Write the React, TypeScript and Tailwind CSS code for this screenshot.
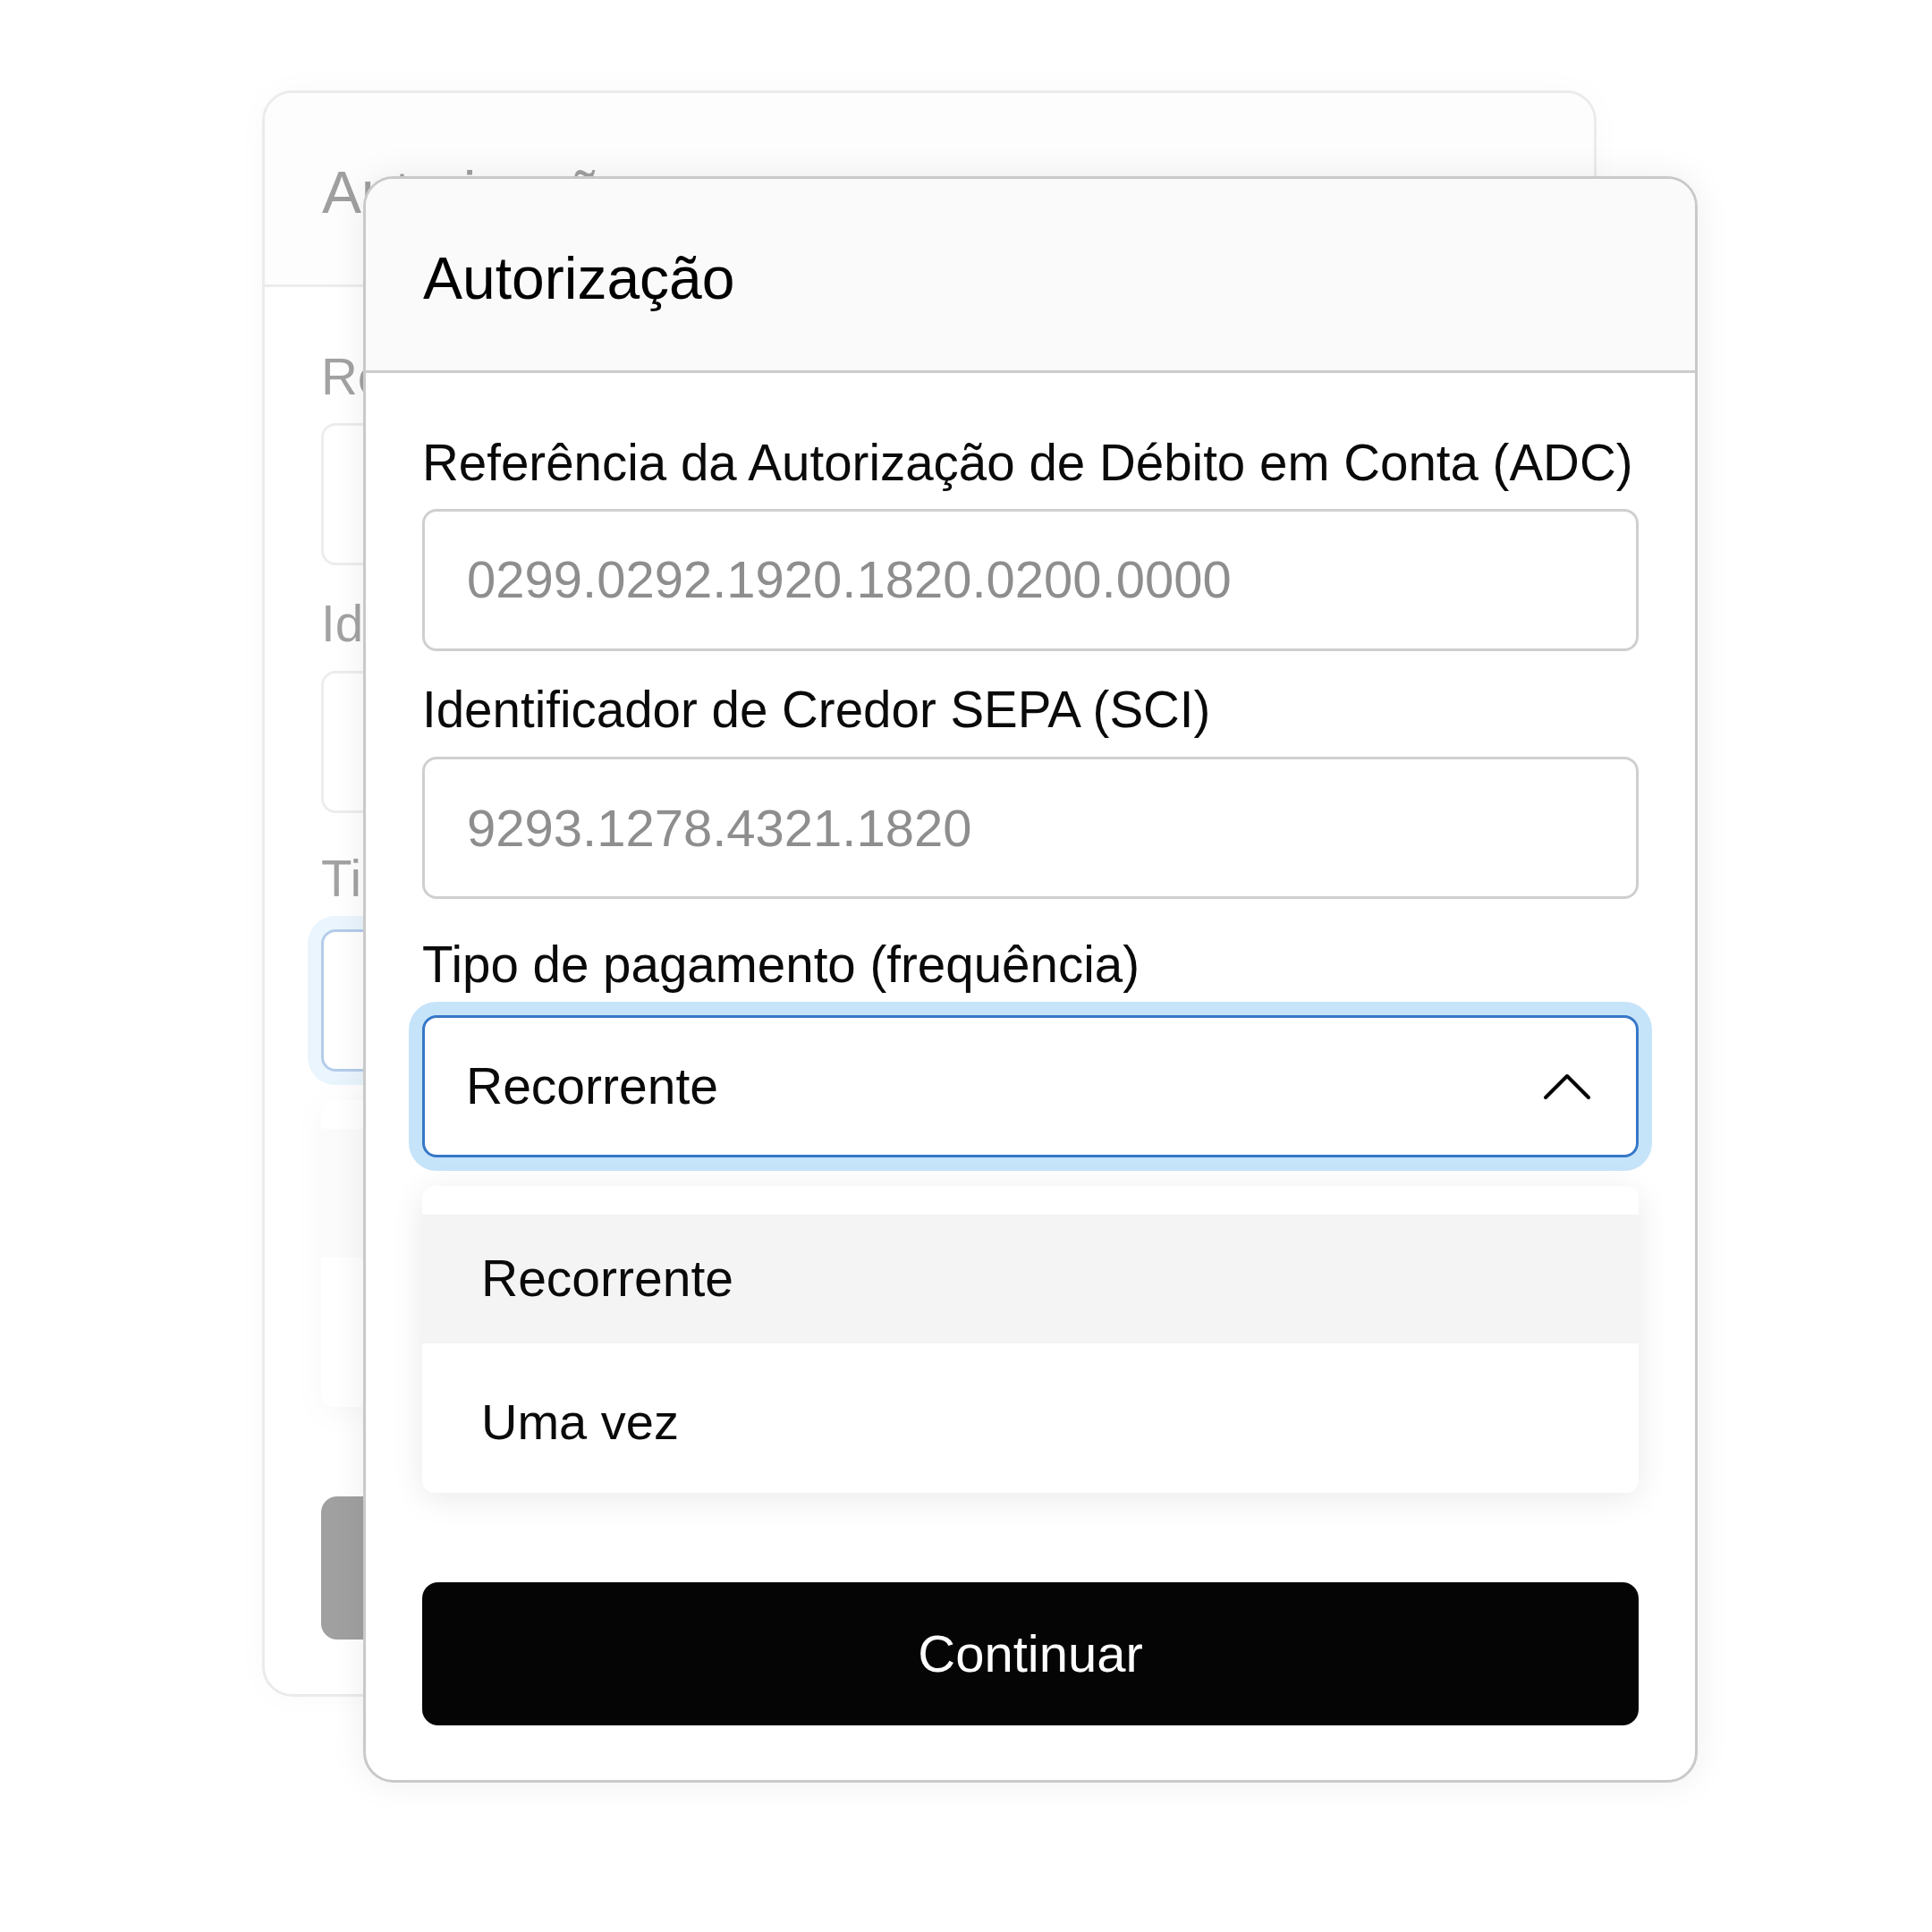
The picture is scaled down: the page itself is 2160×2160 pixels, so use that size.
const FONT = { fontFamily: '"Liberation Sans", Arial, sans-serif' };

function ChevronUp() {
  return (
    <svg width="54" height="31" viewBox="0 0 54 31" fill="none" className="shrink-0">
      <polyline
        points="3,28 27,4 51,28"
        stroke="#000"
        strokeWidth="4"
        strokeLinecap="round"
        strokeLinejoin="round"
      />
    </svg>
  );
}

function Label({ children, className = '' }: { children: React.ReactNode; className?: string }) {
  return <div className={`text-[56.5px] leading-none text-[#0a0a0a] whitespace-nowrap ${className}`}>{children}</div>;
}

function Field({ value, className = '' }: { value: string; className?: string }) {
  return (
    <div
      className={`h-[159px] rounded-[16px] border-[3px] border-[#cfcfcf] bg-white pl-[47px] flex items-center text-[58px] leading-none text-[#8e8e8e] ${className}`}
    >
      {value}
    </div>
  );
}

function AuthCard({ className = '' }: { className?: string }) {
  return (
    <div
      className={`w-[1492px] h-[1796px] rounded-[34px] border-[3px] border-[#c9c9c9] bg-white shadow-[0_0_40px_rgba(0,0,0,0.07)] overflow-hidden flex flex-col ${className}`}
      style={FONT}
    >
      <div className="h-[217px] shrink-0 bg-[#fafafa] border-b-[3px] border-[#cccccc] px-[64px] pt-[78px]">
        <h1 className="text-[66px] leading-none text-black">Autorização</h1>
      </div>

      <div className="flex flex-col px-[63px] pt-[73px] pb-[63px]">
        <Label>Referência da Autorização de Débito em Conta (ADC)</Label>
        <Field value="0299.0292.1920.1820.0200.0000" className="mt-[22px]" />

        <Label className="mt-[38px]">Identificador de Credor SEPA (SCI)</Label>
        <Field value="9293.1278.4321.1820" className="mt-[24px]" />

        <Label className="mt-[46px]">Tipo de pagamento (frequência)</Label>
        <div className="mt-[27px] h-[159px] rounded-[16px] border-[3px] border-[#3677c8] bg-white shadow-[0_0_0_15px_#c6e4f9] pl-[46px] pr-[50px] flex items-center justify-between">
          <span className="text-[57px] leading-none text-[#0a0a0a]">Recorrente</span>
          <ChevronUp />
        </div>

        <div className="mt-[32px] h-[343px] rounded-[14px] bg-white shadow-[0_6px_36px_rgba(0,0,0,0.09)] pt-[32px] overflow-hidden">
          <div className="h-[144px] bg-[#f4f4f4] pl-[66px] flex items-center text-[57px] leading-none text-[#0a0a0a]">
            Recorrente
          </div>
          <div className="pl-[66px] pt-[60px] text-[56px] leading-none text-[#0a0a0a]">Uma vez</div>
        </div>

        <button className="mt-[100px] h-[160px] rounded-[18px] bg-[#050505] text-white text-[58px] leading-none flex items-center justify-center">
          Continuar
        </button>
      </div>
    </div>
  );
}

export default function App() {
  return (
    <div className="w-[2160px] h-[2160px] bg-white overflow-hidden">
      <div className="grid pl-[293px] pt-[101px]">
        <AuthCard className="[grid-area:1/1] justify-self-start self-start opacity-[0.38]" />
        <AuthCard className="[grid-area:1/1] justify-self-start self-start ml-[113px] mt-[96px] relative z-10" />
      </div>
    </div>
  );
}
